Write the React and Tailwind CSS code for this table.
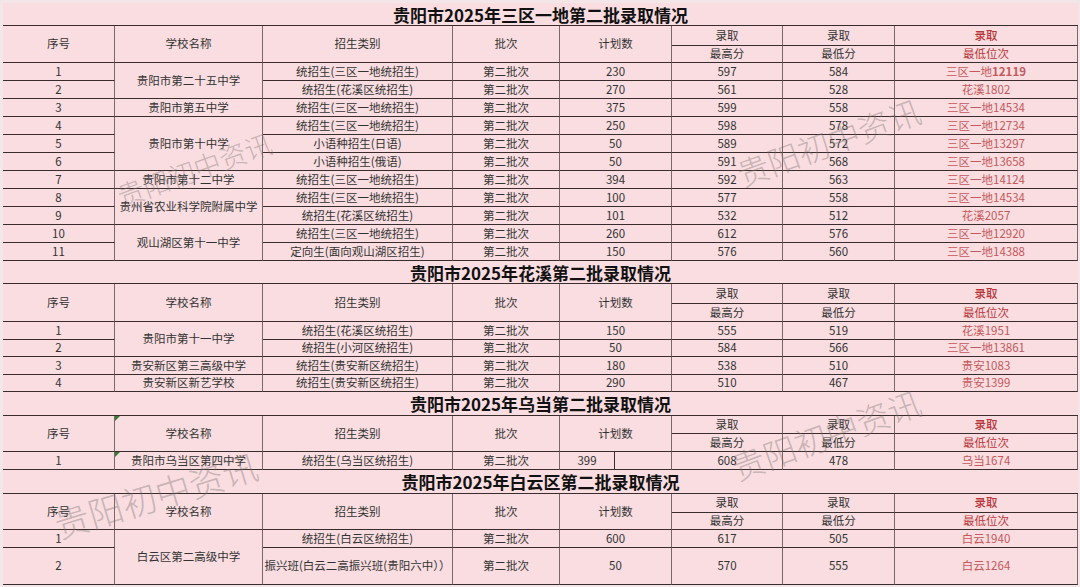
import React from 'react';

const COLS = 'grid grid-cols-[112px_148px_190px_107px_112px_111px_112px_183px]';
const LINE = 'border-r border-b border-r-[#7a6868] border-b-[#3a2c2c]';
const SPAN = { 1: '', 2: 'row-span-2', 3: 'row-span-3' };

const sections = [
  {
    title: '贵阳市2025年三区一地第二批录取情况',
    titleH: 'h-[23px]',
    hdr: 'grid-rows-[20px_17px]',
    body: 'auto-rows-[18px]',
    rows: [
      { no: 1, school: '贵阳市第二十五中学', span: 2, type: '统招生(三区一地统招生)', plan: 230, max: 597, min: 584, area: '三区一地', rank: '12119', bold: true },
      { no: 2, type: '统招生(花溪区统招生)', plan: 270, max: 561, min: 528, area: '花溪', rank: '1802' },
      { no: 3, school: '贵阳市第五中学', span: 1, type: '统招生(三区一地统招生)', plan: 375, max: 599, min: 558, area: '三区一地', rank: '14534' },
      { no: 4, school: '贵阳市第十中学', span: 3, type: '统招生(三区一地统招生)', plan: 250, max: 598, min: 578, area: '三区一地', rank: '12734' },
      { no: 5, type: '小语种招生(日语)', plan: 50, max: 589, min: 572, area: '三区一地', rank: '13297' },
      { no: 6, type: '小语种招生(俄语)', plan: 50, max: 591, min: 568, area: '三区一地', rank: '13658' },
      { no: 7, school: '贵阳市第十二中学', span: 1, type: '统招生(三区一地统招生)', plan: 394, max: 592, min: 563, area: '三区一地', rank: '14124' },
      { no: 8, school: '贵州省农业科学院附属中学', span: 2, type: '统招生(三区一地统招生)', plan: 100, max: 577, min: 558, area: '三区一地', rank: '14534' },
      { no: 9, type: '统招生(花溪区统招生)', plan: 101, max: 532, min: 512, area: '花溪', rank: '2057' },
      { no: 10, school: '观山湖区第十一中学', span: 2, type: '统招生(三区一地统招生)', plan: 260, max: 612, min: 576, area: '三区一地', rank: '12920' },
      { no: 11, type: '定向生(面向观山湖区招生)', plan: 150, max: 576, min: 560, area: '三区一地', rank: '14388' },
    ],
  },
  {
    title: '贵阳市2025年花溪第二批录取情况',
    titleH: 'h-[23px]',
    hdr: 'grid-rows-[20px_18px]',
    body: 'auto-rows-[17.5px]',
    rows: [
      { no: 1, school: '贵阳市第十一中学', span: 2, type: '统招生(花溪区统招生)', plan: 150, max: 555, min: 519, area: '花溪', rank: '1951' },
      { no: 2, type: '统招生(小河区统招生)', plan: 50, max: 584, min: 566, area: '三区一地', rank: '13861' },
      { no: 3, school: '贵安新区第三高级中学', span: 1, type: '统招生(贵安新区统招生)', plan: 180, max: 538, min: 510, area: '贵安', rank: '1083' },
      { no: 4, school: '贵安新区新艺学校', span: 1, type: '统招生(贵安新区统招生)', plan: 290, max: 510, min: 467, area: '贵安', rank: '1399' },
    ],
  },
  {
    title: '贵阳市2025年乌当第二批录取情况',
    titleH: 'h-[24px]',
    hdr: 'grid-rows-[18px_18px]',
    body: 'auto-rows-[18px]',
    marker: true,
    rows: [
      { no: 1, school: '贵阳市乌当区第四中学', span: 1, type: '统招生(乌当区统招生)', plan: 399, split: true, max: 608, min: 478, area: '乌当', rank: '1674' },
    ],
  },
  {
    title: '贵阳市2025年白云区第二批录取情况',
    titleH: 'h-[24px]',
    hdr: 'grid-rows-[19px_17px]',
    body: 'grid-rows-[18px_37px]',
    rows: [
      { no: 1, school: '白云区第二高级中学', span: 2, type: '统招生(白云区统招生)', plan: 600, max: 617, min: 505, area: '白云', rank: '1940' },
      { no: 2, type: '振兴班(白云二高振兴班(贵阳六中））', plan: 50, max: 570, min: 555, area: '白云', rank: '1264' },
    ],
  },
];

function Cell({ children, className = '' }) {
  return (
    <div className={`relative flex items-center justify-center whitespace-nowrap ${LINE} ${className}`}>
      {children}
    </div>
  );
}

function Marker() {
  return <span className="absolute left-0 top-0 h-0 w-0 border-t-[5px] border-r-[5px] border-t-[#2e7d32] border-r-transparent" />;
}

function Section({ s }) {
  return (
    <div>
      <div className={`${s.titleH} flex items-center justify-center border-b border-[#3a2c2c] text-[17px] font-bold text-[#111]`}>
        {s.title}
      </div>

      {/* header */}
      <div className={`${COLS} ${s.hdr}`}>
        <Cell className="row-span-2">序号</Cell>
        <Cell className="row-span-2">
          {s.marker && <Marker />}
          学校名称
        </Cell>
        <Cell className="row-span-2">招生类别</Cell>
        <Cell className="row-span-2">批次</Cell>
        <Cell className="row-span-2">计划数</Cell>
        <Cell>录取</Cell>
        <Cell>录取</Cell>
        <Cell className="font-medium text-[#b8363a]">录取</Cell>
        <Cell>最高分</Cell>
        <Cell>最低分</Cell>
        <Cell className="text-[#b8363a]">最低位次</Cell>
      </div>

      {/* rows */}
      <div className={`${COLS} ${s.body}`}>
        {s.rows.map(r => (
          <React.Fragment key={r.no}>
            <Cell className="col-start-1">{r.no}</Cell>
            {r.school && (
              <Cell className={SPAN[r.span]}>
                {s.marker && <Marker />}
                {r.school}
              </Cell>
            )}
            <Cell className="col-start-3">{r.type}</Cell>
            <Cell>第二批次</Cell>
            {r.split ? (
              <div className={`flex ${LINE}`}>
                <div className="flex w-[55px] items-center justify-center border-r border-r-[#3a2c2c]">{r.plan}</div>
                <div className="flex-1" />
              </div>
            ) : (
              <Cell>{r.plan}</Cell>
            )}
            <Cell>{r.max}</Cell>
            <Cell>{r.min}</Cell>
            <Cell className="text-[#c4585b]">
              {r.area}
              <span className={r.bold ? 'font-bold' : ''}>{r.rank}</span>
            </Cell>
          </React.Fragment>
        ))}
      </div>
    </div>
  );
}

const marks = [
  { pos: 'left-[118px] top-[183px]', size: 'text-[27px]', rot: '-rotate-[20deg]' },
  { pos: 'left-[738px] top-[158px]', size: 'text-[32px]', rot: '-rotate-[20deg]' },
  { pos: 'left-[733px] top-[452px]', size: 'text-[33px]', rot: '-rotate-[20deg]' },
  { pos: 'left-[55px] top-[507px]', size: 'text-[35px]', rot: '-rotate-[17deg]' },
];

export default function App() {
  return (
    <div className="relative h-[587px] w-[1080px] overflow-hidden bg-[#f3e6e8] font-['Noto_Sans_CJK_SC','Noto_Sans',sans-serif] text-[11.5px] leading-none text-[#333]">
      <div className="ml-[3px] mt-[3px] w-[1075px] bg-[#f9dde0]">
        {sections.map(s => (
          <Section key={s.title} s={s} />
        ))}
      </div>

      {/* watermarks */}
      {marks.map((m, i) => (
        <div
          key={i}
          className={`pointer-events-none absolute origin-left whitespace-nowrap font-light leading-none text-[#7a7070]/40 ${m.pos} ${m.size} ${m.rot}`}
        >
          贵阳初中资讯
        </div>
      ))}
    </div>
  );
}
